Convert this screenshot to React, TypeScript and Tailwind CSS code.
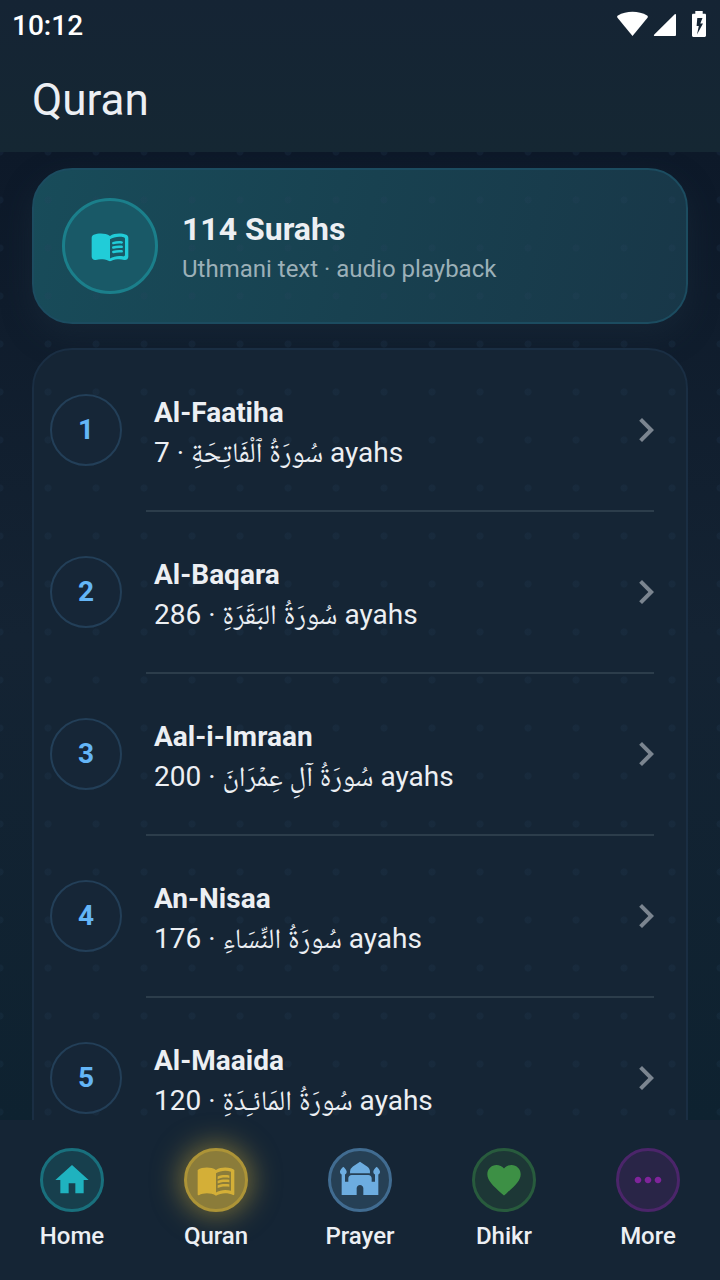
import React from "react";
import type { IconType } from "react-icons";
import { MdChevronRight, MdFavorite, MdHome, MdMenuBook, MdMoreHoriz, MdMosque } from "react-icons/md";

interface Surah {
  number: number;
  name: string;
  arabic: string;
  ayahs: number;
}

interface Tab {
  label: string;
  icon: IconType;
  circle: string;
  active?: boolean;
}

const surahs: Surah[] = [
  { number: 1, name: "Al-Faatiha", arabic: "سُورَةُ ٱلْفَاتِحَةِ", ayahs: 7 },
  { number: 2, name: "Al-Baqara", arabic: "سُورَةُ البَقَرَةِ", ayahs: 286 },
  { number: 3, name: "Aal-i-Imraan", arabic: "سُورَةُ آلِ عِمۡرَانَ", ayahs: 200 },
  { number: 4, name: "An-Nisaa", arabic: "سُورَةُ النِّسَاءِ", ayahs: 176 },
  { number: 5, name: "Al-Maaida", arabic: "سُورَةُ المَائـِدَةِ", ayahs: 120 },
];

const tabs: Tab[] = [
  { label: "Home", icon: MdHome, circle: "border-[#19707d] bg-[#173f4d] text-[#1fb2bf]" },
  {
    label: "Quran",
    icon: MdMenuBook,
    circle: "border-[#ad9437] bg-[#8b7c3a] text-[#d4af37] shadow-[0_0_28px_4px_rgba(212,175,55,0.5)]",
    active: true,
  },
  { label: "Prayer", icon: MdMosque, circle: "border-[#416c91] bg-[#264055] text-[#6dade0]" },
  { label: "Dhikr", icon: MdFavorite, circle: "border-[#285b3d] bg-[#1d3736] text-[#3d9045]" },
  { label: "More", icon: MdMoreHoriz, circle: "border-[#4b256a] bg-[#292547] text-[#7f249b]" },
];

const StatusBar: React.FC = () => (
  <div className="flex h-12 items-center justify-between pl-3 pr-[14px]">
    <span className="pt-1 text-[28px] leading-8 font-medium text-white">10:12</span>
    <div className="flex items-center text-white">
      <svg className="h-[26px] w-8" viewBox="0 0 32 26" fill="currentColor" aria-hidden="true">
        <path d="M16.500 25 1.500 6.700C0.900 5.900 1.100 5 1.900 4.400 6.200 1.900 11.100 0.700 16.500 0.700s10.300 1.200 14.600 3.700c0.800 0.600 1 1.500 0.400 2.300z" />
      </svg>
      <svg className="ml-1 h-[26px] w-6" viewBox="0 0 24 26" fill="currentColor" aria-hidden="true">
        <path d="M22.500 3.500c0.800-0.800 1.500-0.500 1.500 0.500v19.700c0 0.900-0.400 1.300-1.300 1.300H3c-1.200 0-1.500-0.800-0.700-1.600z" />
      </svg>
      <svg className="ml-4 h-[26px] w-[14px]" viewBox="0 0 14 26" fill="currentColor" aria-hidden="true">
        <path
          fillRule="evenodd"
          d="M3.300 0h7.400v2.700h2c0.800 0 1.300 0.500 1.300 1.300v20.600c0 0.900-0.500 1.400-1.300 1.400H1.300C0.500 26 0 25.500 0 24.600V4c0-0.800 0.500-1.300 1.300-1.300h2zM5.300 7 4.600 15h2.200L5 23.500 11 12.500H8.300L10.500 7z"
        />
      </svg>
    </div>
  </div>
);

const OpenBook: React.FC = () => (
  <svg className="size-10" viewBox="0 0 24 24" fill="currentColor" aria-hidden="true">
    <path
      fillRule="evenodd"
      d="M17.5 4.500c-1.950 0-4.050.4-5.500 1.500-1.450-1.100-3.550-1.500-5.500-1.500-1.450 0-2.990.22-4.280.79C1.490 5.620 1 6.330 1 7.140v11.280c0 1.300 1.220 2.260 2.480 1.940.98-.25 2.020-.36 3.020-.36 1.560 0 3.220.26 4.560.92.6.3 1.280.3 1.870 0 1.340-.67 3-.92 4.560-.92 1 0 2.040.11 3.020.36 1.260.33 2.480-.63 2.480-1.940V7.140c0-.81-.49-1.520-1.220-1.850-1.280-.57-2.820-.79-4.270-.79zM21 17.230c0 .63-.58 1.090-1.200.98-.75-.14-1.530-.2-2.300-.2-1.700 0-4.150.65-5.500 1.500V8c1.350-.85 3.800-1.500 5.500-1.500.92 0 1.830.09 2.700.28.46.1.8.51.8.98v9.470z"
    />
    <path d="M13.980 11.010c-.32 0-.61-.2-.71-.52-.13-.39.09-.82.48-.94 1.540-.5 3.530-.66 5.360-.45.41.05.71.42.66.83s-.42.71-.83.66c-1.620-.19-3.390-.04-4.730.39-.08.01-.16.03-.23.03z" />
    <path d="M13.980 13.670c-.32 0-.61-.2-.71-.52-.13-.39.09-.82.48-.94 1.540-.5 3.530-.66 5.360-.45.41.05.71.42.66.83s-.42.71-.83.66c-1.620-.19-3.390-.04-4.730.39-.08.02-.16.03-.23.03z" />
    <path d="M13.980 16.330c-.32 0-.61-.2-.71-.52-.13-.39.09-.82.48-.94 1.540-.5 3.530-.66 5.360-.45.41.05.71.42.66.83s-.42.71-.83.66c-1.620-.19-3.390-.04-4.730.39-.08.02-.16.03-.23.03z" />
  </svg>
);

const SummaryCard: React.FC = () => (
  <section className="flex items-center gap-6 rounded-[40px] border-2 border-[#1c4c60] bg-linear-103 from-[#184c5a] via-[#184150] to-[#183748] p-7 shadow-[0_12px_28px_rgba(26,44,60,0.5)]">
    <div className="relative z-10 flex size-24 shrink-0 items-center justify-center rounded-full border-3 border-[#1b7f8b] bg-[#195967] text-[#21ccd8]">
      <OpenBook />
    </div>
    <div className="relative z-10 pt-1.5">
      <h2 className="text-[32px] leading-10 font-bold text-[#eceff3]">114 Surahs</h2>
      <p className="text-2xl leading-10 text-[#9cb0b8]">Uthmani text · audio playback</p>
    </div>
  </section>
);

const SurahRow: React.FC<{ surah: Surah }> = ({ surah }) => (
  <li className="group relative z-10">
    <button type="button" className="flex h-40 w-full cursor-pointer items-center px-4 text-left">
      <span className="flex size-18 shrink-0 items-center justify-center rounded-full border-2 border-[#233f58] bg-[#162637] text-[28px] leading-8 font-bold text-[#64b5f6]">
        {surah.number}
      </span>
      <span className="ml-8 flex min-w-0 flex-1 flex-col pt-1.5 text-[28px] leading-10 text-[#eceff3]">
        <span className="font-bold">{surah.name}</span>
        <span className="whitespace-nowrap">
          {surah.ayahs} · <span lang="ar">{surah.arabic}</span> ayahs
        </span>
      </span>
      <MdChevronRight className="size-12 shrink-0 text-[#7b8590]" />
    </button>
    <div className="mr-8 ml-28 h-[2px] bg-[#2c3d4b] group-last:hidden" />
  </li>
);

const BottomNav: React.FC = () => (
  <nav className="relative z-20 grid h-40 shrink-0 grid-cols-5 bg-[#152535] pt-7">
    {tabs.map(({ label, icon: Icon, circle, active }) => (
      <a
        key={label}
        href={`#${label.toLowerCase()}`}
        aria-current={active ? "page" : undefined}
        className="flex flex-col items-center gap-2"
      >
        <span className={`flex size-16 items-center justify-center rounded-full border-3 ${circle}`}>
          <Icon className="size-10" />
        </span>
        <span className="text-2xl leading-8 font-medium text-[#eceff3]">{label}</span>
      </a>
    ))}
  </nav>
);

const App: React.FC = () => {
  return (
    <div className="flex h-screen flex-col overflow-hidden bg-[#152535] font-['Roboto','Noto_Naskh_Arabic','Noto_Sans_Arabic','DejaVu_Sans',sans-serif]">
      <header className="shrink-0 bg-linear-to-b from-[#152434] to-[#152733]">
        <StatusBar />
        <h1 className="flex h-26 items-center px-8 text-[44px] leading-12 text-[#eceff3]">Quran</h1>
      </header>

      <main className="relative min-h-0 flex-1 overflow-hidden bg-linear-to-b from-[#0d1929] via-[#142333] to-[#0e2230]">
        <div className="flex h-full flex-col gap-6 px-8 pt-4">
          <SummaryCard />
          <ul className="rounded-t-[40px] border-2 border-[#1a2e43] bg-[#152535]">
            {surahs.map((surah) => (
              <SurahRow key={surah.number} surah={surah} />
            ))}
          </ul>
        </div>
        {/* dot pattern over the backdrop and cards, under their content */}
        <div className="pointer-events-none absolute inset-0 bg-[radial-gradient(circle,rgba(40,68,96,0.18)_3px,transparent_4px)] bg-[length:48px_48px] bg-[position:-24px_-24px]" />
      </main>

      <BottomNav />
    </div>
  );
};

export default App;
